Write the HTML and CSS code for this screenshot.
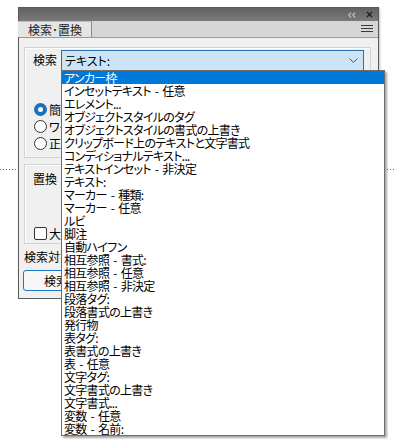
FILE: index.html
```html
<!DOCTYPE html>
<html lang="ja">
<head>
  <meta charset="UTF-8">
  <meta name="viewport" content="width=device-width, initial-scale=1.0">
  <link rel="stylesheet" href="styles.css">
</head>
<body>
  <!-- Panel -->
  <div class="panel">
    <div class="titlebar">
      <svg class="collapse" width="8" height="6" viewBox="0 0 8 6"><polyline points="3,0.5 0.8,3 3,5.5" /><polyline points="7,0.5 4.8,3 7,5.5" /></svg>
      <svg class="close" width="7" height="7" viewBox="0 0 7 7"><path d="M1 1L6 6M6 1L1 6" /></svg>
    </div>
    <div class="tabbar">
      <div class="tab">検索･置換</div>
      <svg class="menu" width="12" height="8" viewBox="0 0 12 8"><path d="M0 0.5H12M0 3.5H12M0 6.5H12" /></svg>
    </div>

    <div class="content">
      <!-- Find group -->
      <div class="group find">
        <div class="row">
          <span class="label">検索</span>
          <div class="select">
            <span>テキスト:</span>
            <svg width="9" height="5" viewBox="0 0 9 5"><polyline points="0.5,0.5 4.5,4.5 8.5,0.5" /></svg>
          </div>
        </div>
        <div class="options">
          <div class="opt"><span class="radio on"></span><span class="text">簡易</span></div>
          <div class="opt"><span class="radio"></span><span class="text">ワイルドカード</span></div>
          <div class="opt"><span class="radio"></span><span class="text">正規表現</span></div>
        </div>
      </div>

      <!-- Replace group -->
      <div class="group replace">
        <div class="label">置換</div>
        <div class="opt"><span class="check"></span><span class="text">大文字と小文字を区別</span></div>
      </div>

      <div class="scope">検索対象</div>
      <button class="btn">検索</button>
    </div>
  </div>

  <!-- Open combo list -->
  <ul class="dropdown">
    <li class="active">アンカー枠</li>
    <li>インセットテキスト - 任意</li>
    <li>エレメント...</li>
    <li>オブジェクトスタイルのタグ</li>
    <li>オブジェクトスタイルの書式の上書き</li>
    <li>クリップボード上のテキストと文字書式</li>
    <li>コンディショナルテキスト...</li>
    <li>テキストインセット - 非決定</li>
    <li>テキスト:</li>
    <li>マーカー - 種類:</li>
    <li>マーカー - 任意</li>
    <li>ルビ</li>
    <li>脚注</li>
    <li>自動ハイフン</li>
    <li>相互参照 - 書式:</li>
    <li>相互参照 - 任意</li>
    <li>相互参照 - 非決定</li>
    <li>段落タグ:</li>
    <li>段落書式の上書き</li>
    <li>発行物</li>
    <li>表タグ:</li>
    <li>表書式の上書き</li>
    <li>表 - 任意</li>
    <li>文字タグ:</li>
    <li>文字書式の上書き</li>
    <li>文字書式...</li>
    <li>変数 - 任意</li>
    <li>変数 - 名前:</li>
  </ul>
</body>
</html>
```

FILE: styles.css
```css
/* General */
body {
  margin: 0;
  padding: 7px 0 0 18px;
  font-family: "Noto Sans CJK JP", "Noto Sans", sans-serif;
  font-size: 12px;
  line-height: 13px;
  font-feature-settings: "palt";
  color: #000000;
  background-color: #FFFFFF;
  /* dotted guide of the document behind the panel */
  background-image: repeating-linear-gradient(to right, #666666 0 1px, transparent 1px 3px);
  background-size: 100% 1px;
  background-position: 0 169px;
  background-repeat: no-repeat;
}

/* Panel */
.panel {
  width: 359px;
  border: 1px solid #5a5a5a;
  background-color: #F0F0F0;
  box-shadow: 1px 1px 2px rgba(0, 0, 0, 0.25);
}

.titlebar {
  height: 13px;
  display: flex;
  align-items: center;
  justify-content: flex-end;
  gap: 10px;
  padding-right: 5px;
  background: linear-gradient(#626262, #7a7a7a);
}

.titlebar svg {
  fill: none;
  stroke-width: 1.3;
}

.collapse {
  stroke: #b8b8b8;
}

.close {
  stroke: #1e1e1e;
  stroke-width: 2;
}

.tabbar {
  height: 16px;
  display: flex;
  align-items: stretch;
  justify-content: space-between;
  background-color: #D6D6D6;
  border-bottom: 1px solid #9a9a9a;
}

.tab {
  padding: 0 9px 0 10px;
  margin-left: -1px;
  display: flex;
  align-items: center;
  background-color: #E4E4E4;
  border-right: 1px solid #8a8a8a;
  border-top: 1px solid #bdbdbd;
  color: #222222;
}

.menu {
  align-self: center;
  margin-right: 5px;
  stroke: #3a3a3a;
  stroke-width: 1;
}

/* Content */
.content {
  padding: 9px 7px 7px 5px;
}

.group {
  border: 1px solid #d2d2d2;
  box-shadow: inset 1px 1px 0 #FFFFFF;
}

.find {
  padding: 2px 6px 5px 8px;
}

.row {
  display: flex;
  align-items: flex-start;
}

.row .label {
  width: 28px;
  padding-top: 3px;
}

.select {
  flex: 1;
  height: 19px;
  display: flex;
  align-items: center;
  justify-content: space-between;
  padding: 0 5px 0 3px;
  background-color: #CDE4F7;
  border: 1px solid #2a6fae;
}

.select svg {
  fill: none;
  stroke: #555555;
  stroke-width: 1;
}

.options {
  margin-top: 30px;
  padding-left: 1px;
}

.opt {
  height: 17px;
  display: flex;
  align-items: center;
  gap: 2px;
}

/* labels run under the open list, so they are cut at its edge */
.opt .text {
  width: 13px;
  overflow: hidden;
  white-space: nowrap;
}

.radio {
  flex: none;
  width: 13px;
  height: 13px;
  box-sizing: border-box;
  border: 1px solid #333333;
  border-radius: 50%;
  background-color: #FFFFFF;
}

.radio.on {
  border: 4px solid #1a6fc4;
}

.check {
  flex: none;
  width: 13px;
  height: 13px;
  box-sizing: border-box;
  border: 1px solid #333333;
  border-radius: 2px;
  background-color: #FFFFFF;
}

.replace {
  margin-top: 6px;
  padding: 7px 6px 1px 9px;
}

.replace .label {
  margin-left: -1px;
  margin-bottom: 40px;
}

.scope {
  margin-top: 6px;
  width: 37px;
  height: 14px;
  line-height: 14px;
  overflow: hidden;
  white-space: nowrap;
}

.btn {
  display: block;
  margin: 6px 0 0 -1px;
  width: 82px;
  height: 21px;
  padding: 0 0 0 20px;
  text-align: left;
  font: inherit;
  background-color: #F7F7F7;
  border: 1px solid #1a78c8;
  border-radius: 3px;
}

/* Open combo list */
.dropdown {
  position: absolute;
  left: 61px;
  top: 70px;
  width: 322px;
  margin: 0;
  padding: 0;
  list-style: none;
  letter-spacing: -0.7px;
  word-spacing: 2px;
  background-color: #FFFFFF;
  border: 1px solid #6e6e6e;
  box-shadow: 2px 2px 2px rgba(0, 0, 0, 0.35);
}

.dropdown li {
  height: 13px;
  padding-left: 2px;
  white-space: nowrap;
}

.dropdown li.active {
  background-color: #0078D7;
  color: #FFFFFF;
}
```
